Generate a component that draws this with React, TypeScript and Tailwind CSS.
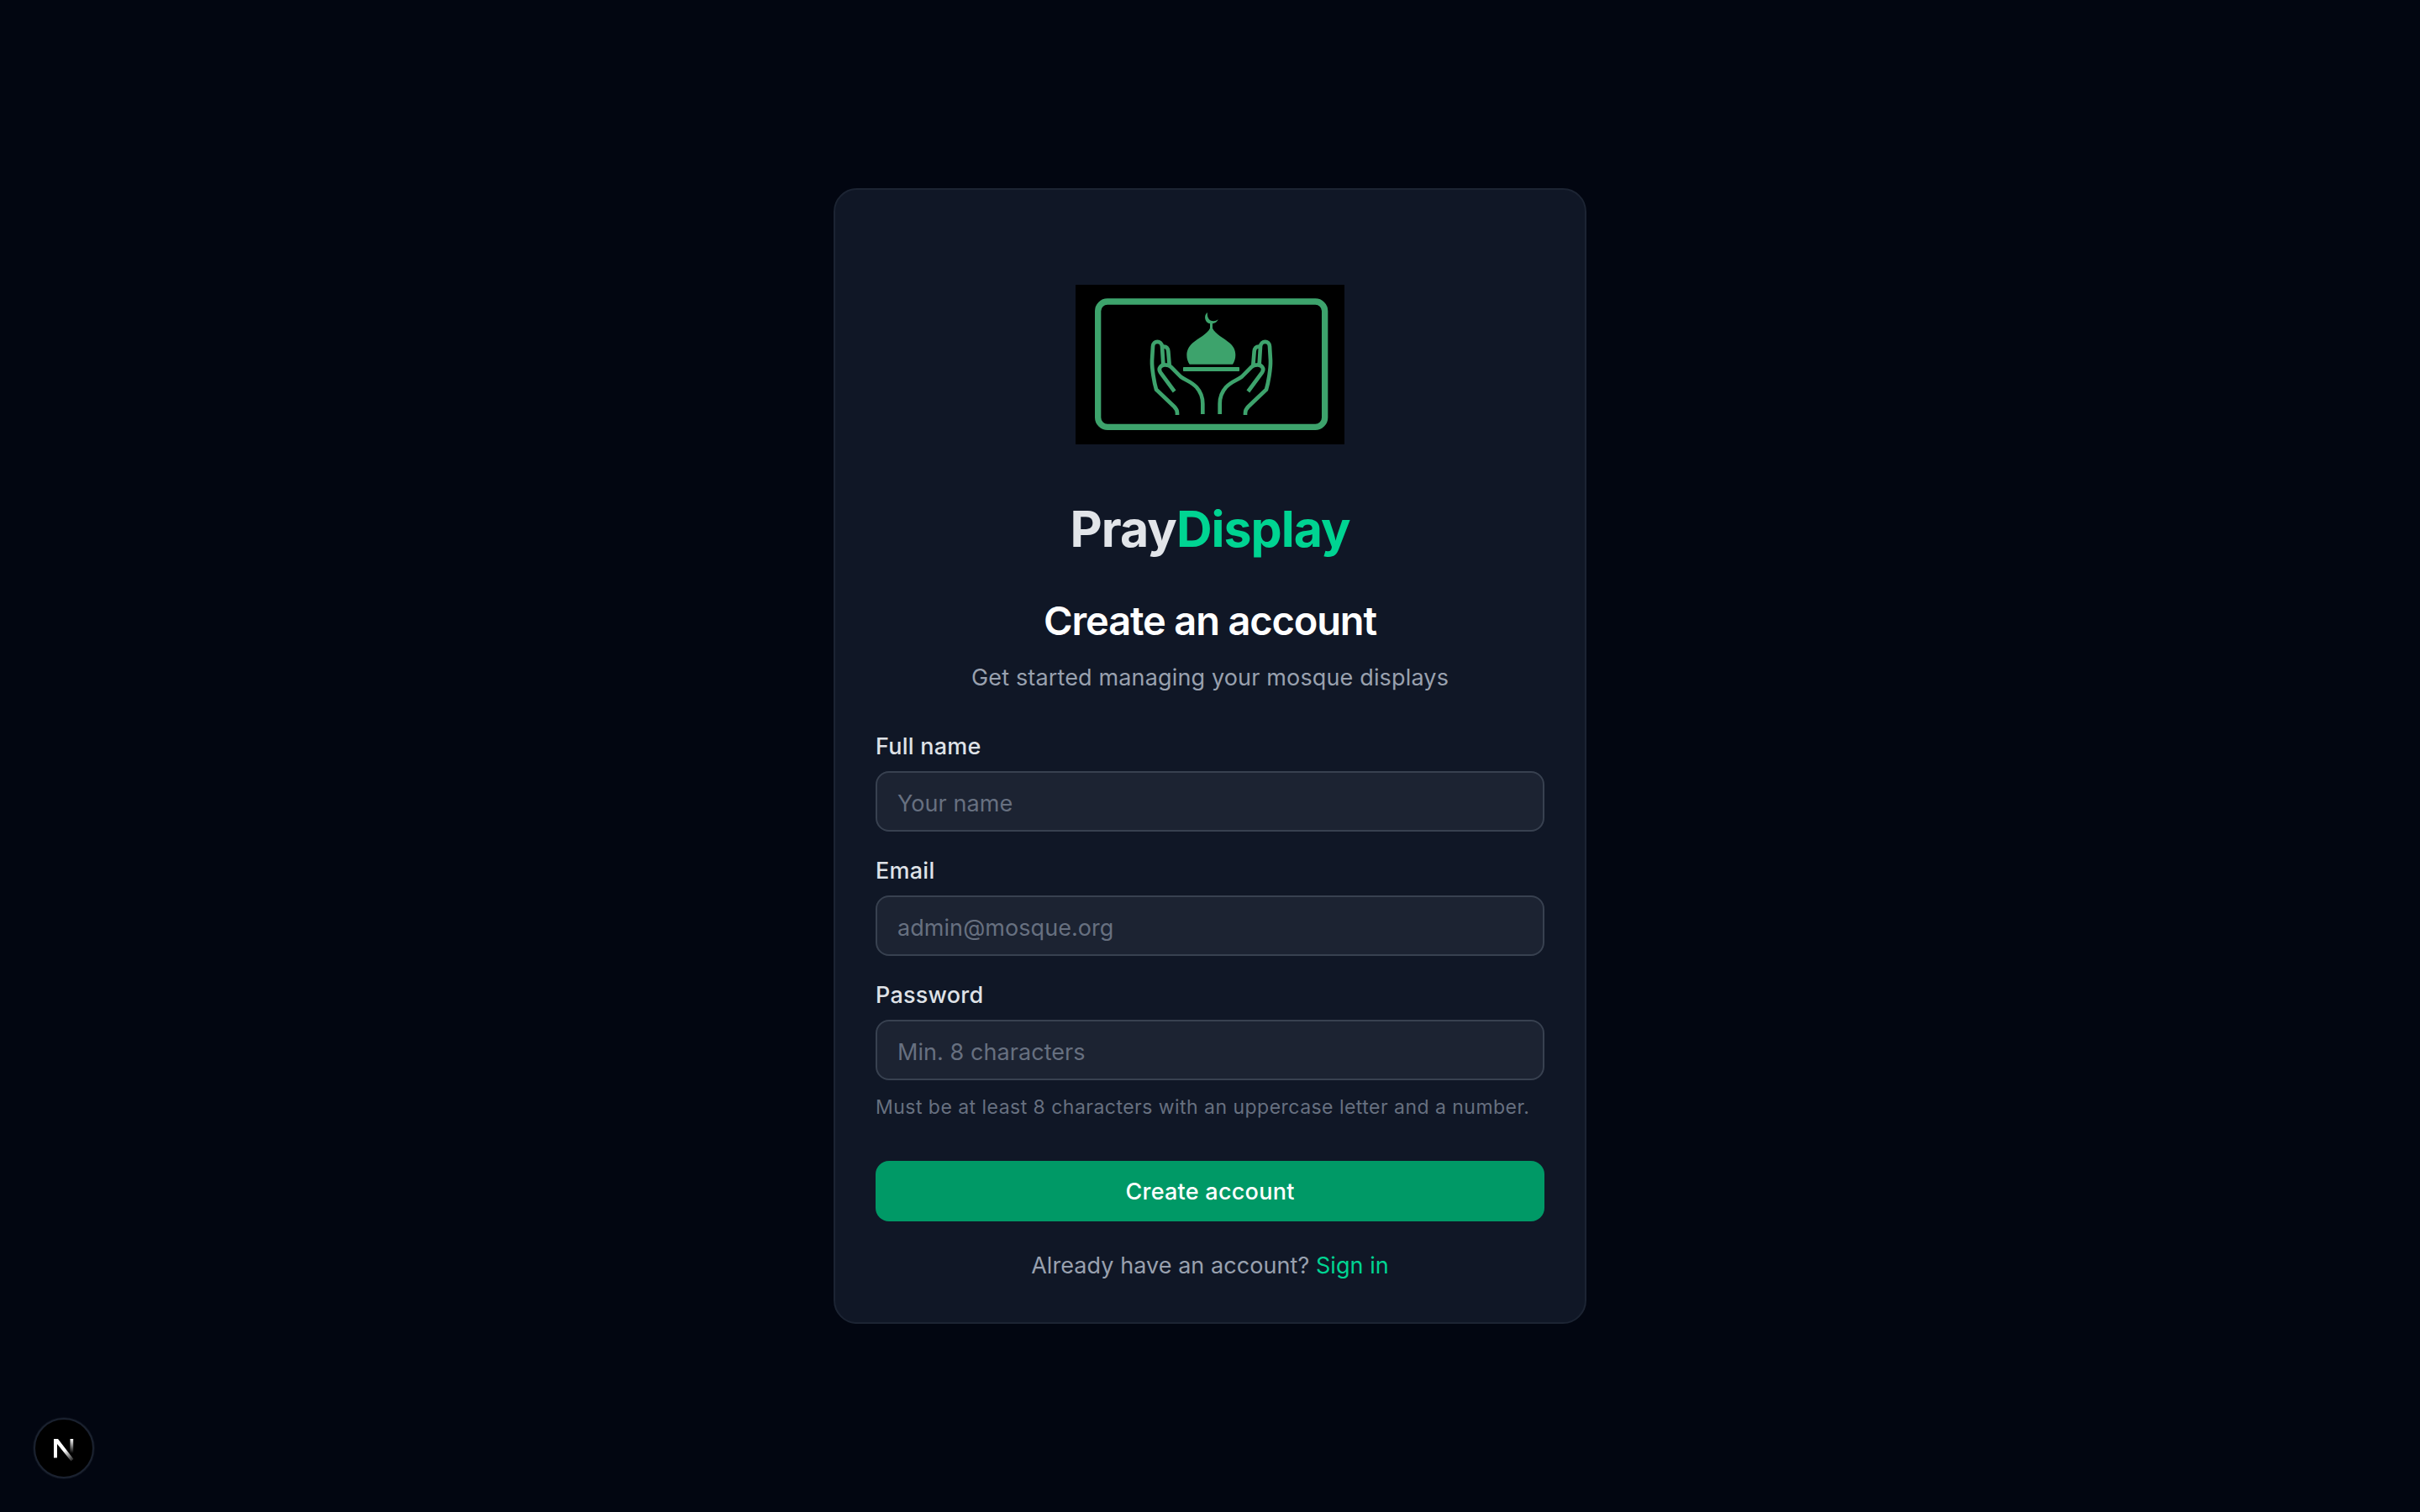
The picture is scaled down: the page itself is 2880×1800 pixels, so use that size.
import React from "react";

const fields = [
  { id: "name", label: "Full name", type: "text", placeholder: "Your name" },
  {
    id: "email",
    label: "Email",
    type: "email",
    placeholder: "admin@mosque.org",
  },
  {
    id: "password",
    label: "Password",
    type: "password",
    placeholder: "Min. 8 characters",
    hint: "Must be at least 8 characters with an uppercase letter and a number.",
  },
];

function Hand() {
  return (
    <g fill="none" stroke="#3da36c" strokeWidth="14">
      <path d="M363 465V458C363 447 358 441 352 435L288 374C281 350 272 300 273 270L276 220C277 198 307 198 309 220L313 284" />
      <path d="M311 221C325 219 330 227 331 238L335 286" />
      <path d="M353 381L303 313C293 298 306 285 320 286C331 286 336 288 341 294L375 328C392 341 412 345 432 366C448 384 454 404 454 425V462" />
    </g>
  );
}

function Logo() {
  return (
    <svg viewBox="0 0 960 570" className="block h-[190px] w-[320px] bg-black">
      <rect
        x="80"
        y="60"
        width="810"
        height="448"
        rx="34"
        fill="none"
        stroke="#3da36c"
        strokeWidth="22"
      />
      <g fill="#3da36c">
        <path d="M471 99C456 108 460 139 484 139C496 139 506 133 509 124C494 136 467 130 471 99Z" />
        <path d="M480 135H489V155C498 176 530 190 550 208C566 221 571 237 571 251C571 264 567 275 561 284H407C401 275 397 264 397 251C397 237 403 221 418 208C438 190 471 176 480 155Z" />
        <rect x="384" y="294" width="201" height="15" rx="2" />
      </g>
      <Hand />
      <g transform="matrix(-1 0 0 1 969 0)">
        <Hand />
      </g>
    </svg>
  );
}

function DevBadge() {
  return (
    <div className="fixed bottom-10 left-10 flex size-[72px] items-center justify-center rounded-full border-2 border-[#1b2230] bg-black ring-1 ring-[#0c111c]">
      <svg
        viewBox="0 0 24 32"
        className="h-8 w-6 overflow-visible"
        fill="none"
      >
        <defs>
          <linearGradient
            id="diag"
            x1="14"
            y1="18"
            x2="23"
            y2="31"
            gradientUnits="userSpaceOnUse"
          >
            <stop stopColor="#fff" />
            <stop offset="1" stopColor="#fff" stopOpacity="0.1" />
          </linearGradient>
          <linearGradient
            id="stem"
            x1="0"
            y1="5"
            x2="0"
            y2="22"
            gradientUnits="userSpaceOnUse"
          >
            <stop stopColor="#fff" />
            <stop offset="1" stopColor="#fff" stopOpacity="0" />
          </linearGradient>
        </defs>
        <path d="M0 5H5L23.5 29L20.5 31.5L4 11V27.5H0Z" fill="url(#diag)" />
        <path d="M19.5 5H23.2V22H19.5Z" fill="url(#stem)" />
      </svg>
    </div>
  );
}

export default function App() {
  return (
    <div className="flex h-screen items-center justify-center bg-[#020611] font-['Inter',sans-serif]">
      <div className="h-[1352px] w-[896px] rounded-[28px] border-2 border-[#1c2433] bg-[#101726] px-12 pt-[113px]">
        <div className="flex flex-col items-center">
          <Logo />
          <h1 className="mt-[65px] text-[59px] leading-[72px] font-bold tracking-[-1px] text-[#e2e5e9]">
            Pray<span className="text-[#00d492]">Display</span>
          </h1>
          <h2 className="mt-[41px] text-[47px] leading-[64px] font-semibold tracking-[-1.15px] text-white">
            Create an account
          </h2>
          <p className="mt-4 text-[27px] leading-10 tracking-[0.15px] text-[#99a1af]">
            Get started managing your mosque displays
          </p>
        </div>

        <form className="mt-[42px]">
          {fields.map((field) => (
            <div key={field.id} className="mb-[27px]">
              <label
                htmlFor={field.id}
                className="block text-[27px] leading-10 font-medium tracking-[0.25px] text-[#dfe2e7]"
              >
                {field.label}
              </label>
              <input
                id={field.id}
                type={field.type}
                placeholder={field.placeholder}
                className="mt-[9px] block h-[72px] w-full rounded-2xl border-2 border-[#384150] bg-[#1c2332] px-6 pt-1 text-[27px] tracking-[0.06px] placeholder:text-[#677080]"
              />
              {field.hint && (
                <p className="mt-4 text-[23px] leading-8 tracking-[0.47px] whitespace-nowrap text-[#677080]">
                  {field.hint}
                </p>
              )}
            </div>
          ))}
          <button
            type="button"
            className="mt-[21px] h-[72px] w-full rounded-2xl bg-[#009966] pt-0.5 text-[27px] font-medium tracking-[0.25px] text-white"
          >
            Create account
          </button>
        </form>

        <p className="mt-[33px] text-center text-[27px] leading-10 tracking-[0.06px] text-[#99a1af]">
          Already have an account?{" "}
          <a href="#" className="text-[#00d492]">
            Sign in
          </a>
        </p>
      </div>
      <DevBadge />
    </div>
  );
}
